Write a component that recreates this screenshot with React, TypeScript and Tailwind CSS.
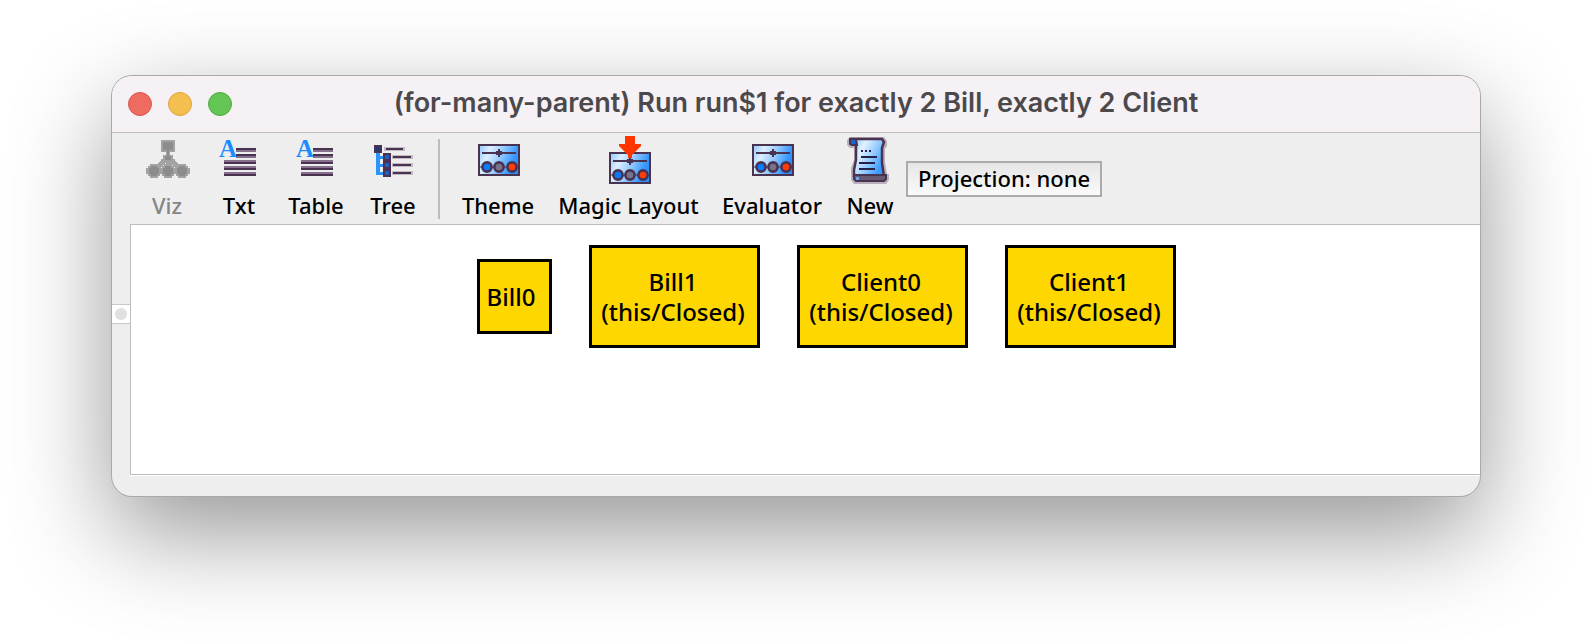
import type { ReactNode } from "react";

const INK = "#4a3350";

function VizIcon() {
  return (
    <svg className="size-12" viewBox="0 0 48 48" shapeRendering="crispEdges" aria-hidden="true">
      <g fill="#a3a3a3" stroke="#a3a3a3">
        <path d="M18 4h14v12H18z M23 16h4v6h-4z" stroke="none" />
        <path d="M25 22L11 34M25 22L39 34M25 20V34" strokeWidth="5" fill="none" />
        <path d="M20 19h10v4h2v4h-14v-4h2z" stroke="none" />
        <path d="M7 28h8v2h2v2h2v-2h2v-2h8v2h2v2h2v-2h2v-2h8v2h2v2h2v6h-2v2h-2v2h-8v-2h-2v-2h-2v2h-2v2h-8v-2h-2v-2h-2v2h-2v2H7v-2H5v-2H3v-6h2v-2h2z" stroke="none" />
      </g>
      <g fill="#8c8c8c">
        <path d="M20 6h10v8H20z M24 14h2v8h-2z M22 20h6v4h-6z" />
        <path d="M8 30h6v2h2v6h-2v2H8v-2H6v-6h2z M22 30h6v2h2v6h-2v2h-6v-2h-2v-6h2z M36 30h6v2h2v6h-2v2h-6v-2h-2v-6h2z" />
      </g>
    </svg>
  );
}

function TextIcon() {
  return (
    <svg className="size-12" viewBox="0 0 48 48" aria-hidden="true">
      <g fill="#85718b" shapeRendering="crispEdges">
        <path d="M21 14h20v2H21z M21 20h20v2H21z M9 24h32v2H9z M9 30h32v2H9z M9 36h32v2H9z" />
      </g>
      <g fill={INK} shapeRendering="crispEdges">
        <path d="M21 12h20v2H21z M21 18h20v2H21z M9 26h32v2H9z M9 32h32v2H9z M9 38h32v2H9z" />
      </g>
      <text x="13" y="21" textAnchor="middle" fontSize="25" fontWeight="700" fontFamily="Liberation Serif, serif" fill="#1a8cff">A</text>
    </svg>
  );
}

function TreeIcon() {
  const rows = [21, 29, 37];
  return (
    <svg className="size-12" viewBox="0 0 48 48" shapeRendering="crispEdges" aria-hidden="true">
      <path d="M7 16h4v4h4v3h-4v5h4v3h-4v5h4v3H7z" fill="#2a95ff" />
      <path d="M5 9h8v8H5z" fill={INK} />
      <path d="M7 11h4v4H7z" fill="#203a78" />
      <path d="M15 11h21v4H15z" fill="#c4bac6" />
      <path d="M17 12h17v2H17z" fill={INK} />
      {rows.map((y) => (
        <g key={y}>
          <rect x="14" y={y - 4} width="8" height="8" fill={INK} />
          <rect x="16" y={y - 2} width="4" height="4" fill="#205fc8" />
          <rect x="23" y={y - 2} width="21" height="4" fill="#c4bac6" />
          <rect x="24" y={y - 1} width="18" height="2" fill={INK} />
        </g>
      ))}
    </svg>
  );
}

function PanelIcon({ id, arrow = false }: { id: string; arrow?: boolean }) {
  return (
    <svg className="size-12" viewBox="0 0 48 48" aria-hidden="true">
      <defs>
        <linearGradient id={id} x1="0" y1="0.3" x2="1" y2="0.6">
          <stop offset="0" stopColor="#a4d2ff" />
          <stop offset="0.2" stopColor="#dcefff" />
          <stop offset="0.5" stopColor="#98ccff" />
          <stop offset="0.85" stopColor="#3596ff" />
          <stop offset="1" stopColor="#2a8cf5" />
        </linearGradient>
      </defs>
      <g transform={arrow ? "translate(0 8)" : undefined}>
        <rect x="5" y="9" width="40" height="30" fill={`url(#${id})`} stroke={INK} strokeWidth="2" />
        <path d="M8 17h34" stroke={INK} strokeWidth="2" />
        <path d="M24 13h2v2h2v4h-2v2h-2v-2h-2v-4h2z" fill={INK} />
        <path d="M6 31h38" stroke={INK} strokeWidth="1" />
        <g stroke={INK} strokeWidth="2.6">
          <circle cx="13" cy="31" r="4.6" fill="#0a7bff" />
          <circle cx="25" cy="31" r="4.6" fill="#77738a" />
          <circle cx="38" cy="31" r="4.6" fill="#ff3d08" />
        </g>
      </g>
      {arrow && <path d="M20 0h10v8h6v2l-2 2l-7 7v3h-4v-3l-7-7l-2-2V8h6z" fill="#ff3500" />}
    </svg>
  );
}

function ScrollIcon() {
  return (
    <svg className="size-12" viewBox="0 0 48 48" aria-hidden="true">
      <defs>
        <linearGradient id="paper" x1="0" y1="0" x2="1" y2="0.6">
          <stop offset="0" stopColor="#8ac6ff" />
          <stop offset="0.35" stopColor="#e0f2ff" />
          <stop offset="0.7" stopColor="#8cc6ff" />
          <stop offset="1" stopColor="#3b99ff" />
        </linearGradient>
      </defs>
      <path d="M4 1h34l3 4v5l-2 3v13l2 12h2v6l-3 4H8l-3-4V32l3-8V12H4l-3-3V4z" fill="#b9b0bb" />
      <path d="M6 3h30l2 3-2 6v15l2 13H8v-6l2-10V8z" fill="url(#paper)" stroke={INK} strokeWidth="2.5" />
      <path d="M4 3h6l1 6H6L4 8z" fill="#1565d8" stroke={INK} strokeWidth="2" />
      <path d="M8 39h32v4l-2 2H10l-2-2z" fill="#66596f" stroke={INK} strokeWidth="2" />
      <path d="M10 41h3v3h-3z" fill="#6aa8f0" />
      <path d="M15 15h2M19 15h2M23 15h2M15 21h16M13 27h16M13 33h16" stroke="#25204c" strokeWidth="2" />
    </svg>
  );
}

function Tool({ label, icon, width, disabled = false }: { label: string; icon: ReactNode; width: string; disabled?: boolean }) {
  return (
    <button
      type="button"
      disabled={disabled}
      className={`flex shrink-0 flex-col items-center gap-[7px] self-start whitespace-nowrap pt-[3px] text-[22px] font-medium leading-7 text-black disabled:text-[#858585] ${width}`}
    >
      {icon}
      <span>{label}</span>
    </button>
  );
}

function Node({ name, set }: { name: string; set?: string }) {
  return (
    <div
      className={`flex shrink-0 flex-col items-center justify-center border-[3px] border-black bg-[#ffd700] text-2xl font-medium leading-[30px] text-black ${
        set ? "h-[103px] w-[171px] pr-0.5" : "h-[75px] w-[75px] pr-1.5"
      }`}
    >
      <span>{name}</span>
      {set && <span>{set}</span>}
    </div>
  );
}

export default function App() {
  return (
    <div className="min-h-screen bg-white px-28 pb-[147px] pt-[76px] font-['Noto_Sans',sans-serif]">
      <main className="flex flex-col overflow-hidden rounded-[20px] bg-[#eeeeee] shadow-[0_0_0_1px_#a9a9a9,0_36px_100px_rgba(0,0,0,0.42)]">
        <header className="flex h-[57px] items-center border-b border-[#bfbfbf] bg-[#f6f1f5] px-4">
          <div className="flex w-26 shrink-0 gap-4">
            <button type="button" aria-label="Close" className="size-6 rounded-full border border-[#d8564c] bg-[#ed6b5f]" />
            <button type="button" aria-label="Minimize" className="size-6 rounded-full border border-[#dba23f] bg-[#f5bf4f]" />
            <button type="button" aria-label="Zoom" className="size-6 rounded-full border border-[#50a842] bg-[#62c554]" />
          </div>
          <h1 className="flex-1 whitespace-nowrap pb-0.5 pr-26 text-center font-['Inter',sans-serif] text-[27px] font-semibold leading-8 text-[#4b494b]">
            (for-many-parent) Run run$1 for exactly 2 Bill, exactly 2 Client
          </h1>
        </header>

        <div className="flex">
          <aside className="w-[18px] shrink-0 pt-[171px]">
            <button
              type="button"
              aria-label="Expand side panel"
              className="flex h-5 w-full items-center justify-center border-y border-[#c8c8c8] bg-white"
            >
              <span className="size-3 rounded-full bg-[#e0e0e0]" />
            </button>
          </aside>

          <div className="min-w-0 flex-1 border-b border-white">
            <div role="toolbar" aria-label="Instance views" className="flex h-[91px] items-center pl-px">
              <Tool label="Viz" icon={<VizIcon />} width="w-18" disabled />
              <Tool label="Txt" icon={<TextIcon />} width="w-18" />
              <Tool label="Table" icon={<TextIcon />} width="w-[82px]" />
              <Tool label="Tree" icon={<TreeIcon />} width="w-18" />
              <div className="mx-[9px] h-20 w-0.5 shrink-0 bg-[#bdbdbd]" />
              <Tool label="Theme" icon={<PanelIcon id="theme" />} width="w-[98px]" />
              <Tool label="Magic Layout" icon={<PanelIcon id="magic" arrow />} width="w-[163px]" />
              <Tool label="Evaluator" icon={<PanelIcon id="evaluator" />} width="w-[124px]" />
              <Tool label="New" icon={<ScrollIcon />} width="w-18" />
              <button
                type="button"
                className="flex h-9 shrink-0 items-center whitespace-nowrap border-2 border-[#ababab] bg-linear-to-b from-[#e6e6e6] to-[#fafafa] px-2.5 pb-0.5 text-[22px] font-medium leading-7 text-black"
              >
                Projection: none
              </button>
            </div>
            <section
              aria-label="Instance graph"
              className="flex h-[251px] items-start justify-center border-y border-l border-[#bdbdbd] bg-white pl-[41px] pt-5"
            >
              <div className="flex items-center gap-[37px]">
                <Node name="Bill0" />
                <Node name="Bill1" set="(this/Closed)" />
                <Node name="Client0" set="(this/Closed)" />
                <Node name="Client1" set="(this/Closed)" />
              </div>
            </section>
          </div>
        </div>
        <footer className="h-5" />
      </main>
    </div>
  );
}
